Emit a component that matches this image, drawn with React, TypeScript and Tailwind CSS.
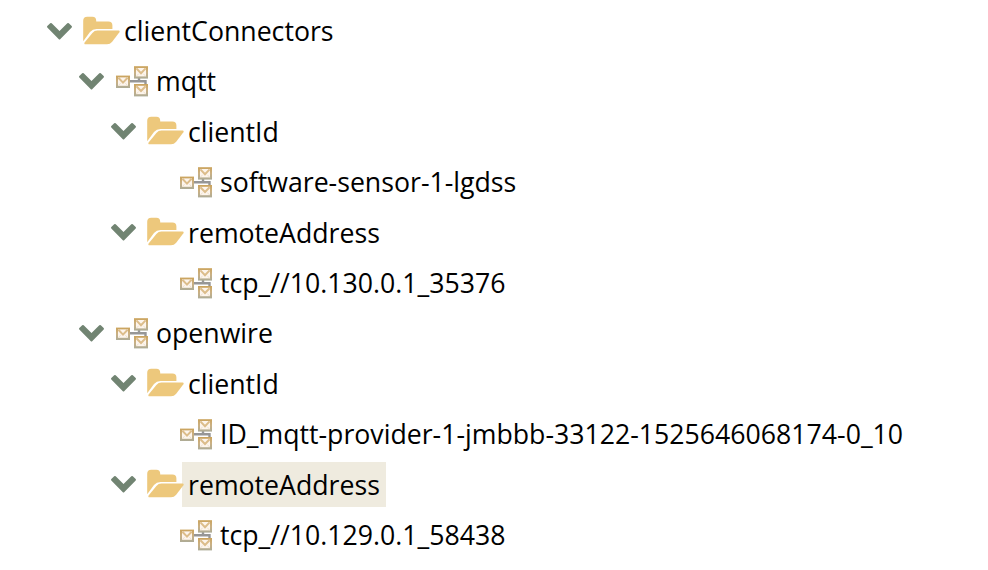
import React from "react";

type Row = { depth: number; kind: "folder" | "queue"; label: string; leaf?: boolean; selected?: boolean };

const rows: Row[] = [
  { depth: 0, kind: "folder", label: "clientConnectors" },
  { depth: 1, kind: "queue", label: "mqtt" },
  { depth: 2, kind: "folder", label: "clientId" },
  { depth: 3, kind: "queue", label: "software-sensor-1-lgdss", leaf: true },
  { depth: 2, kind: "folder", label: "remoteAddress" },
  { depth: 3, kind: "queue", label: "tcp_//10.130.0.1_35376", leaf: true },
  { depth: 1, kind: "queue", label: "openwire" },
  { depth: 2, kind: "folder", label: "clientId" },
  { depth: 3, kind: "queue", label: "ID_mqtt-provider-1-jmbbb-33122-1525646068174-0_10", leaf: true },
  { depth: 2, kind: "folder", label: "remoteAddress", selected: true },
  { depth: 3, kind: "queue", label: "tcp_//10.129.0.1_58438", leaf: true },
];

const indents = ["pl-[46px]", "pl-[78px]", "pl-[110px]", "pl-[142px]"];

function Chevron() {
  return (
    <svg className="h-8 w-7 shrink-0" viewBox="0 0 28 32">
      <path
        d="M13.5 23.4Q13 23.4 12.6 22.9L1.3 11.6Q.7 10.8 1.3 10.1L4.2 7.2Q4.9 6.6 5.7 7.2L13.5 15L21.3 7.2Q22.1 6.6 22.8 7.2L25.7 10.1Q26.3 10.8 25.7 11.6L14.4 22.9Q14 23.4 13.5 23.4Z"
        fill="#718472"
      />
    </svg>
  );
}

function Folder() {
  return (
    <svg className="h-8 w-[38px] shrink-0" viewBox="0 -0.5 38 32">
      <path d="M1.2 24.8V4.2Q1.2.2 5.2.2H10.4Q14.2.2 14.2 4V5H26.4Q30.4 5 30.4 9V12.4H14.6Q10.6 12.4 8 15.4Z" fill="#edc87c" />
      <path d="M2.6 26L10.4 16.4Q12.4 14 15.4 14H36.6Q38.2 14 37.4 15.7L30.2 25.2Q28 27.8 25 27.8H3.8Q1.6 27.8 2.6 26Z" fill="#edc87c" />
    </svg>
  );
}

function Envelope({ x, y }: { x: number; y: number }) {
  return (
    <g transform={`translate(${x} ${y})`}>
      <rect width="14" height="12.4" fill="url(#envelopeBorder)" />
      <rect x="2" y="1.8" width="10" height="8.4" fill="#fdf5ed" />
      <path d="M2.4 2.2L7 7L11.6 2.2" fill="none" stroke="#dcbd8b" strokeWidth="2" />
      <path d="M2.4 10L4.6 7.6M11.6 10L9.4 7.6" fill="none" stroke="#eee1cc" strokeWidth="1" />
    </g>
  );
}

function Queue() {
  return (
    <svg className="h-8 w-8 shrink-0" viewBox="0 0 32 32">
      <defs>
        <linearGradient id="envelopeBorder" x1="0" y1="0" x2="0" y2="1">
          <stop offset="0" stopColor="#cba35b" />
          <stop offset=".5" stopColor="#cab083" />
          <stop offset="1" stopColor="#adab96" />
        </linearGradient>
      </defs>
      <path d="M14 15.3H29.5V19M23 12V15.3" fill="none" stroke="#969696" strokeWidth="2.4" />
      <Envelope x={0} y={9.6} />
      <Envelope x={18} y={0.2} />
      <Envelope x={18} y={18} />
    </svg>
  );
}

export default function App() {
  return (
    <main className="h-[570px] w-[988px] overflow-hidden bg-white pt-[6.35px] font-['Open_Sans',sans-serif] text-[26.68px] text-black">
      {rows.map((row, i) => (
        <div key={i} className={`flex h-[50.42px] items-center ${indents[row.depth]}`}>
          <div className="flex w-9 shrink-0">{!row.leaf && <Chevron />}</div>
          <div className={`z-10 flex w-9 shrink-0 ${row.kind === "queue" ? "pl-[2px]" : ""}`}>
            {row.kind === "folder" ? <Folder /> : <Queue />}
          </div>
          <span
            className={`mb-px flex h-[45px] items-center whitespace-nowrap px-[6px] ${row.selected ? "bg-[#efebdf]" : ""}`}
          >
            {row.label}
          </span>
        </div>
      ))}
    </main>
  );
}
